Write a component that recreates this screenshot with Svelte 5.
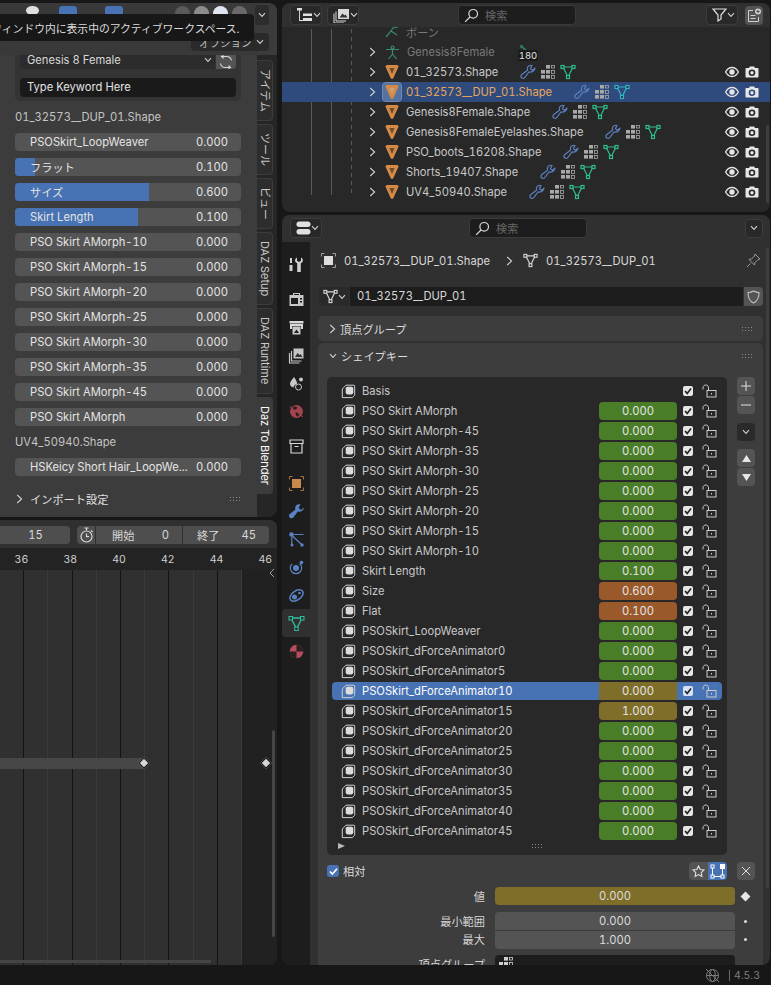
<script>
	const morphs = [
		{ name: 'PSOSkirt_LoopWeaver', value: '0.000', fill: 0 },
		{ name: 'フラット', value: '0.100', fill: 9 },
		{ name: 'サイズ', value: '0.600', fill: 59.3 },
		{ name: 'Skirt Length', value: '0.100', fill: 54.4 },
		{ name: 'PSO Skirt AMorph-10', value: '0.000', fill: 0 },
		{ name: 'PSO Skirt AMorph-15', value: '0.000', fill: 0 },
		{ name: 'PSO Skirt AMorph-20', value: '0.000', fill: 0 },
		{ name: 'PSO Skirt AMorph-25', value: '0.000', fill: 0 },
		{ name: 'PSO Skirt AMorph-30', value: '0.000', fill: 0 },
		{ name: 'PSO Skirt AMorph-35', value: '0.000', fill: 0 },
		{ name: 'PSO Skirt AMorph-45', value: '0.000', fill: 0 },
		{ name: 'PSO Skirt AMorph', value: '0.000', fill: 0 }
	];

	const sideTabs = [
		{ label: 'アイテム' },
		{ label: 'ツール' },
		{ label: 'ビュー' },
		{ label: 'DAZ Setup' },
		{ label: 'DAZ Runtime' },
		{ label: 'Daz To Blender', active: true }
	];

	const rulerLabels = ['36', '38', '40', '42', '44', '46'];
	const gridCells = [0, 1, 2, 3, 4, 5, 6, 7, 8, 9];

	const meshes = [
		{ name: '01_32573.Shape' },
		{ name: '01_32573__DUP_01.Shape', selected: true },
		{ name: 'Genesis8Female.Shape' },
		{ name: 'Genesis8FemaleEyelashes.Shape' },
		{ name: 'PSO_boots_16208.Shape' },
		{ name: 'Shorts_19407.Shape' },
		{ name: 'UV4_50940.Shape' }
	];

	const shapeKeys = [
		{ name: 'Basis' },
		{ name: 'PSO Skirt AMorph', value: '0.000' },
		{ name: 'PSO Skirt AMorph-45', value: '0.000' },
		{ name: 'PSO Skirt AMorph-35', value: '0.000' },
		{ name: 'PSO Skirt AMorph-30', value: '0.000' },
		{ name: 'PSO Skirt AMorph-25', value: '0.000' },
		{ name: 'PSO Skirt AMorph-20', value: '0.000' },
		{ name: 'PSO Skirt AMorph-15', value: '0.000' },
		{ name: 'PSO Skirt AMorph-10', value: '0.000' },
		{ name: 'Skirt Length', value: '0.100' },
		{ name: 'Size', value: '0.600', tone: 'orange' },
		{ name: 'Flat', value: '0.100', tone: 'orange' },
		{ name: 'PSOSkirt_LoopWeaver', value: '0.000' },
		{ name: 'PSOSkirt_dForceAnimator0', value: '0.000' },
		{ name: 'PSOSkirt_dForceAnimator5', value: '0.000' },
		{ name: 'PSOSkirt_dForceAnimator10', value: '0.000', tone: 'yellow', selected: true },
		{ name: 'PSOSkirt_dForceAnimator15', value: '1.000', tone: 'yellow' },
		{ name: 'PSOSkirt_dForceAnimator20', value: '0.000' },
		{ name: 'PSOSkirt_dForceAnimator25', value: '0.000' },
		{ name: 'PSOSkirt_dForceAnimator30', value: '0.000' },
		{ name: 'PSOSkirt_dForceAnimator35', value: '0.000' },
		{ name: 'PSOSkirt_dForceAnimator40', value: '0.000' },
		{ name: 'PSOSkirt_dForceAnimator45', value: '0.000' }
	];

	const editorTabs = [
		{ icon: 'tool' },
		{ icon: 'render', gap: 'wide' },
		{ icon: 'output' },
		{ icon: 'layer' },
		{ icon: 'scene' },
		{ icon: 'world' },
		{ icon: 'collection', gap: 'wide' },
		{ icon: 'object', gap: 'wider' },
		{ icon: 'modifier' },
		{ icon: 'particles' },
		{ icon: 'physics' },
		{ icon: 'constraint' },
		{ icon: 'data', active: true },
		{ icon: 'material' }
	];
</script>

{#snippet chevronDown()}
	<svg class="chev" viewBox="0 0 8 6"><path d="M1 1.2 4 4.4 7 1.2" /></svg>
{/snippet}

{#snippet chevronRight()}
	<svg class="chev-r" viewBox="0 0 7 10"><path d="M1.2 1 5.6 5 1.2 9" /></svg>
{/snippet}

{#snippet grip()}
	<svg class="grip" viewBox="0 0 12 6"><path d="M1 1h1v1H1zM4 1h1v1H4zM7 1h1v1H7zM10 1h1v1h-1zM1 4h1v1H1zM4 4h1v1H4zM7 4h1v1H7zM10 4h1v1h-1z" /></svg>
{/snippet}

{#snippet meshData(color, size = 16)}
	<svg width={size} height={size} viewBox="0 0 16 16" fill="none" stroke={color} stroke-width="1.2">
		<path d="M3 3h10L8 13z" />
		<rect x="1" y="1.5" width="3" height="3" fill="#282828" />
		<rect x="12" y="1.5" width="3" height="3" fill="#282828" />
		<rect x="6.5" y="11.5" width="3" height="3" fill="#282828" />
	</svg>
{/snippet}

{#snippet wrench(color)}
	<svg width="16" height="16" viewBox="0 0 16 16" fill="none" stroke={color} stroke-width="1.2" stroke-linejoin="round">
		<path d="M15 4.200 12.300 6.200 10.400 4.600 12 1.500C9.800.7 7.600 2 7.400 4.200c-.1.700.1 1.300.3 1.900L1.600 10.700c-1 .9-.9 2.500.1 3.200 1 .8 2.400.6 3.100-.4l4.300-5.600c2.600.6 5.500-.8 5.900-3.700z" />
	</svg>
{/snippet}

{#snippet vertexGroups(color = '#a8a8a8')}
	<svg width="16" height="16" viewBox="0 0 16 16" fill={color}>
		<rect x="6" y="1" width="4" height="3.600" />
		<rect x="1" y="6" width="4" height="3.600" />
		<rect x="6" y="6" width="4" height="3.600" />
		<rect x="1" y="11" width="4" height="3.600" />
		<rect x="6" y="11" width="4" height="3.600" />
		<rect x="11.500" y="6.500" width="3" height="3" fill="none" stroke={color} stroke-width="0.8" />
		<rect x="11.500" y="11.500" width="3" height="3" fill="none" stroke={color} stroke-width="0.8" />
		<rect x="11.500" y="1.500" width="3" height="2.500" fill="none" stroke={color} stroke-width="0.8" />
	</svg>
{/snippet}

{#snippet eye()}
	<svg width="14" height="12" viewBox="0 0 14 12">
		<path d="M.6 6C2.200 3 4.500 1.500 7 1.500S11.800 3 13.400 6C11.800 9 9.500 10.500 7 10.500S2.200 9 .6 6z" fill="none" stroke="#e6e6e6" stroke-width="1.300" />
		<circle cx="7" cy="6" r="2.700" fill="#e6e6e6" />
	</svg>
{/snippet}

{#snippet camera()}
	<svg width="14" height="12" viewBox="0 0 14 12">
		<path fill-rule="evenodd" fill="#e6e6e6" d="M1.500 2H4l.8-1.500h4.400L10 2h2.500c.6 0 1 .4 1 1v7.500c0 .6-.4 1-1 1h-11c-.6 0-1-.4-1-1V3c0-.6.4-1 1-1zM7 3.500a3.300 3.300 0 1 0 0 6.600 3.300 3.300 0 0 0 0-6.600z" />
		<circle cx="7" cy="6.800" r="1.700" fill="#e6e6e6" />
	</svg>
{/snippet}

{#snippet search()}
	<svg class="search-ico" viewBox="0 0 16 16" fill="none" stroke="#d8d8d8" stroke-width="1.300">
		<circle cx="9.800" cy="6.200" r="4.600" />
		<path d="M6.400 9.600 1.200 14.800" />
	</svg>
{/snippet}

{#snippet shapeKeyIcon()}
	<svg class="sk-ico" width="15" height="15" viewBox="0 0 15 15">
		<path d="M5 1.200h8c.4 0 .7.300.7.700v9c0 .4-.2.700-.5.900l-2 1.800H1.300V5z" fill="none" stroke="#cfcfcf" stroke-width="1" />
		<rect x="4.700" y="2.800" width="7.600" height="7.600" rx="1.800" fill="#dcdcdc" />
	</svg>
{/snippet}

{#snippet lock()}
	<svg class="lock" width="15" height="14" viewBox="0 0 15 14" fill="none" stroke="#cdcdcd" stroke-width="1">
		<path d="M1 5.500V3.800C1 2.300 2.200 1 3.800 1S6.500 2.300 6.500 3.800V6.500" />
		<rect x="5" y="6.500" width="9" height="6.500" />
		<path d="M9.500 9v1.500" />
	</svg>
{/snippet}

{#snippet tabIcon(name)}
	<svg width="17" height="17" viewBox="0 0 17 17">
		{#if name === 'tool'}
			<path d="M2 2h2v5H2zM1.500 9h3v6h-3z" fill="#d0d0d0" />
			<path d="M9 1.500v3.200l2 1.300 2-1.300V1.500c2 .8 2.600 3.600 1 5l-1.200.7V16h-3.600V7.200l-1.200-.7C6.400 5.100 7 2.300 9 1.500z" fill="#d0d0d0" />
		{:else if name === 'render'}
			<path fill-rule="evenodd" fill="#c8c8c8" d="M5 4V2h7v2h3.500v11H1.500V4zm1-1v1h5V3zM3 7v6h7V7zm9 0v1.500h2V7zm0 3v1.500h2V10z" />
		{:else if name === 'output'}
			<path d="M1.500 2h14v2.500h-14z" fill="#d8d8d8" />
			<path d="M2 5h13v5h-2V7H4v3H2z" fill="#d8d8d8" />
			<path fill-rule="evenodd" d="M4.500 7.500h8v8h-8zm1.500 6.500h5l-2.500-3.500z" fill="#c8c8c8" />
		{:else if name === 'layer'}
			<path d="M5.500 1.500h10v10h-10z" fill="#c4c4c4" />
			<path d="M7 10l2.500-4 2 2 1-1 2 3z" fill="#333" />
			<path d="M3.500 4v10h10M1.500 6v10h10" fill="none" stroke="#c4c4c4" stroke-width="1.200" />
		{:else if name === 'scene'}
			<path d="M6 2c1.500 2.600 3 4.400 3 6 0 .5-.1.900-.3 1.300-1.600.2-2.900 1.500-3.200 3.200C3.600 12.300 2 10.800 2 8.800 2 6.500 4.400 4.600 6 2z" fill="#c8c8c8" />
			<circle cx="10.500" cy="12" r="3" fill="none" stroke="#c8c8c8" />
			<circle cx="13" cy="4.500" r="2" fill="#c8c8c8" />
		{:else if name === 'world'}
			<circle cx="8.500" cy="8.500" r="6.500" fill="#a3434f" />
			<path d="M5 4c2-1 3.500-.5 4 .5S7.500 7 6 7 4 5 5 4zM8 9c2 0 4 1 3.500 2.500S9 14 8.500 13 7 9.500 8 9z" fill="#2a1e20" />
			<path d="M2 3.500 15 14" stroke="#a3434f" stroke-width="1" />
		{:else if name === 'collection'}
			<path d="M2 2h13v3.500H2z" fill="none" stroke="#d8d8d8" stroke-width="1.200" />
			<path d="M3 5.500V15h11V5.500M6.500 8.500h4" fill="none" stroke="#d8d8d8" stroke-width="1.200" />
		{:else if name === 'object'}
			<rect x="4" y="4" width="9" height="9" fill="#c9884e" />
			<path d="M1.500 4.500v-3h3M12.500 1.500h3v3M15.500 12.500v3h-3M4.500 15.500h-3v-3" fill="none" stroke="#a8733f" />
		{:else if name === 'modifier'}
			<path d="M16 4.500 13 7 10.500 5l2-3.500C10 .5 7.500 2 7.200 4.500c-.1.800.1 1.500.3 2.100L1.800 11c-1.200 1-1.100 2.800.1 3.700 1.200.9 2.800.7 3.600-.5L9.800 8.500c3 .7 6-1 6.200-4z" fill="#5b83c4" />
		{:else if name === 'particles'}
			<circle cx="3.500" cy="3.500" r="2.300" fill="#5b83c4" />
			<circle cx="14" cy="14" r="1.700" fill="#5b83c4" />
			<circle cx="4" cy="14" r="1.500" fill="#5b83c4" />
			<path d="M4 4.500 13 13M6 3.500h9.500M3.800 6v7" stroke="#5b83c4" stroke-width="1.200" />
		{:else if name === 'physics'}
			<circle cx="8" cy="9" r="5.700" fill="none" stroke="#5b83c4" stroke-width="1.200" stroke-dasharray="22 8" />
			<circle cx="8" cy="9" r="3" fill="#5b83c4" />
			<circle cx="13.500" cy="3.500" r="1.800" fill="#5b83c4" />
		{:else if name === 'constraint'}
			<ellipse cx="8.500" cy="8.500" rx="7.500" ry="4.500" transform="rotate(-35 8.500 8.500)" fill="none" stroke="#5b83c4" stroke-width="1.500" />
			<circle cx="6.500" cy="10" r="2.500" fill="#5b83c4" />
			<circle cx="11.500" cy="6" r="1.300" fill="#5b83c4" />
		{:else if name === 'data'}
			<path d="M3 3h11L8.500 14z" fill="none" stroke="#2fbf9b" stroke-width="1.300" />
			<rect x="1" y="1.500" width="3.500" height="3.500" fill="#303030" stroke="#2fbf9b" />
			<rect x="12.500" y="1.500" width="3.500" height="3.500" fill="#303030" stroke="#2fbf9b" />
			<rect x="6.700" y="12" width="3.500" height="3.500" fill="#303030" stroke="#2fbf9b" />
		{:else if name === 'material'}
			<circle cx="8.500" cy="8.500" r="6.800" fill="#b84c5c" />
			<path d="M8.500 1.700A6.800 6.800 0 0 1 15.300 8.500H8.500zM8.500 8.500H1.700A6.800 6.800 0 0 0 8.500 15.300z" fill="#262022" />
		{/if}
	</svg>
{/snippet}

<div class="screen">
	<div class="workspace">
		<div class="left">
			<section class="viewport">
				<div class="sidebar-col">
					<div class="top-strip">
						<div class="clipped-icons">
							<span class="hdr-eye"></span>
							<span class="hdr-blue one"></span>
							<span class="hdr-blue two"></span>
							<span class="hdr-sphere"></span>
							<span class="hdr-sphere"></span>
							<span class="hdr-sphere lit"></span>
							<span class="hdr-sphere"></span>
						</div>
					</div>
					<div class="preset-box">
						<div class="preset-row">
							<div class="preset-select">
								<span>Genesis 8 Female</span>
								{@render chevronDown()}
							</div>
							<div class="refresh">
								<svg width="14" height="14" viewBox="0 0 14 14" fill="none" stroke="#d8d8d8" stroke-width="1.100">
									<path d="M1.500 8.500c.5 2.500 2.500 4 5 4h5M12.500 5.500c-.5-2.500-2.500-4-5-4h-5M9.500 10.500l2 2-2 1M4.500 3.500l-2-2 2-1" />
								</svg>
							</div>
						</div>
						<div class="keyword">Type Keyword Here</div>
					</div>

					<div class="group-label">01_32573__DUP_01.Shape</div>
					<div class="sliders">
						{#each morphs as morph}
							<div class="slider">
								<div class="slider-fill" style="width: {morph.fill}%"></div>
								<span class="slider-name">{morph.name}</span>
								<span class="slider-value">{morph.value}</span>
							</div>
						{/each}
					</div>
					<div class="group-label">UV4_50940.Shape</div>
					<div class="sliders">
						<div class="slider">
							<span class="slider-name">HSKeicy Short Hair_LoopWe...</span>
							<span class="slider-value">0.000</span>
						</div>
					</div>
					<div class="import-row">
						{@render chevronRight()}
						<span>インポート設定</span>
						{@render grip()}
					</div>
				</div>

				<div class="side-tabs">
					{#each sideTabs as tab}
						<div class="side-tab" class:active={tab.active}>{tab.label}</div>
					{/each}
				</div>

				<div class="options-drop">
					<span>オプション</span>
					{@render chevronDown()}
				</div>
				<div class="top-drop">{@render chevronDown()}</div>
				<div class="tooltip"><span>ウィンドウ内に表示中のアクティブワークスペース.</span></div>
			</section>

			<section class="timeline">
				<div class="tl-header">
					<div class="tl-current">15</div>
					<div class="tl-range">
						<div class="tl-clock">
							<svg width="15" height="16" viewBox="0 0 15 16" fill="none" stroke="#d8d8d8" stroke-width="1.200">
								<circle cx="7.500" cy="9.500" r="5.500" />
								<path d="M7.500 6.500v3.200h2.500M5.500 1h4M7.500 1v2.500M12 3.500l1.500 1.500" />
							</svg>
						</div>
						<div class="tl-field"><span>開始</span><span>0</span></div>
						<div class="tl-field"><span>終了</span><span>45</span></div>
					</div>
				</div>
				<div class="tl-ruler">
					{#each rulerLabels as label}
						<span>{label}</span>
					{/each}
					<svg class="tl-arrow" width="6" height="10" viewBox="0 0 6 10" fill="none" stroke="#a0a0a0"><path d="M5 1 1 5l4 4" /></svg>
				</div>
				<div class="tl-canvas">
					<div class="tl-grid">
						{#each gridCells as i}
							<div class="tl-cell" class:major={i % 2 === 0}></div>
						{/each}
					</div>
					<div class="tl-hold"></div>
					<div class="tl-key first"></div>
					<div class="tl-key second"></div>
					<div class="tl-vscroll"></div>
					<div class="tl-hscroll"></div>
				</div>
			</section>
		</div>

		<div class="right">
			<section class="outliner">
				<div class="ol-header">
					<div class="hdr-btn">
						<svg width="17" height="14" viewBox="0 0 17 14" fill="#e0e0e0"><path d="M1 0h5v2.500H1zM3 2.500h.9V12H8v1H3zM7 5.500h9V8H7zM7 10h9v3H7z" /></svg>
						{@render chevronDown()}
					</div>
					<div class="hdr-btn second">
						<svg width="17" height="15" viewBox="0 0 17 15"><path d="M5 1h11v10H5z" fill="#d8d8d8" /><path d="M6.500 9.500l3-4 2 2 1-1 2 3z" fill="#333" /><path d="M3 3.500V13h10M1 5.500V15h10" fill="none" stroke="#d8d8d8" /></svg>
						{@render chevronDown()}
					</div>
					<div class="search-box ol-search">
						{@render search()}
						<span>検索</span>
					</div>
					<div class="hdr-btn filter">
						<svg width="15" height="14" viewBox="0 0 15 14" fill="none" stroke="#e0e0e0" stroke-width="1.200"><path d="M1 1h13L9 7v4l-3 2V7z" /></svg>
						{@render chevronDown()}
					</div>
					<div class="new-coll">
						<svg width="15" height="15" viewBox="0 0 15 15" fill="none" stroke="#d0d0d0"><path d="M6 2.500H1.500v11h10V9M3.500 7.500h5M3.500 10.500h5" /><circle cx="11" cy="3.500" r="3" fill="#d0d0d0" stroke="none" /><path d="M11 1.800v3.400M9.300 3.500h3.400" stroke="#555" /></svg>
					</div>
				</div>

				<div class="ol-rows">
					<i class="tree-line" style="left: 29px"></i>
					<i class="tree-line" style="left: 49px"></i>
					<i class="tree-line dashed" style="left: 69px"></i>

					<div class="ol-row dim clip">
						<svg class="ol-obj" width="14" height="12" viewBox="0 0 14 12" fill="none" stroke="#3c8a74" stroke-width="1.200"><path d="M1 11 6 5l2-3 5-1M6 5l6 4" /></svg>
						<span class="ol-name">ボーン</span>
					</div>
					<div class="ol-row dim">
						<span class="ol-exp">{@render chevronRight()}</span>
						<svg class="ol-obj" width="15" height="15" viewBox="0 0 15 15" fill="none" stroke="#3c8a74" stroke-width="1.200"><circle cx="7.500" cy="2.500" r="1.500" /><path d="M1 4.500h13M7.500 4v5M7.500 9 3.500 14M7.500 9l4 5" /></svg>
						<span class="ol-name">Genesis8Female</span>
						<span class="bone-badge">
							<svg width="10" height="10" viewBox="0 0 10 10" fill="#2d7a5c"><path d="M1 1.500 3 .5l1.500 2.500L9 7l-1.500 2-4-4.500L1 3.500z" /></svg>
							<b>180</b>
						</span>
					</div>
					{#each meshes as mesh}
						<div class="ol-row" class:selected={mesh.selected}>
							<span class="ol-exp">{@render chevronRight()}</span>
							<span class="ol-obj mesh-wrap">
								<svg width="14" height="16" viewBox="0 0 14 16" fill="none">
									<path d="M2 2.500h10L7 13.500z" stroke="#d58a47" stroke-width="3" stroke-linejoin="round" fill={mesh.selected ? '#c9a27d' : '#6e4d30'} />
								</svg>
							</span>
							<span class="ol-name">{mesh.name}</span>
							<span class="ol-mods">
								{@render wrench('#5b7fbf')}
								{@render vertexGroups()}
								{@render meshData(mesh.selected ? '#2fb4c8' : '#2fbf8f')}
							</span>
							<span class="ol-vis">{@render eye()}{@render camera()}</span>
						</div>
					{/each}
				</div>
				<div class="ol-scroll"></div>
			</section>

			<section class="props">
				<div class="props-header">
					<div class="hdr-btn">
						<svg width="15" height="14" viewBox="0 0 15 14"><rect x=".5" y=".5" width="14" height="5.500" rx="2.700" fill="#e0e0e0" /><rect x=".5" y="8" width="14" height="5.500" rx="2.700" fill="#e0e0e0" /></svg>
						{@render chevronDown()}
					</div>
					<div class="search-box props-search">
						{@render search()}
						<span>検索</span>
					</div>
					<div class="hdr-square">{@render chevronDown()}</div>
				</div>
				<div class="props-body">
					<nav class="editor-tabs">
						{#each editorTabs as tab}
							<div class="editor-tab {tab.gap ?? ''}" class:active={tab.active}>{@render tabIcon(tab.icon)}</div>
						{/each}
					</nav>

					<div class="props-main">
						<div class="crumbs">
							<svg width="15" height="15" viewBox="0 0 15 15"><rect x="3" y="3" width="9" height="9" fill="#dedede" /><path d="M.5 3.500v-3h3M11.500.5h3v3M14.500 11.500v3h-3M3.500 14.500h-3v-3" fill="none" stroke="#a0a0a0" /></svg>
							<span class="crumb-a">01_32573__DUP_01.Shape</span>
							{@render chevronRight()}
							<span class="crumb-mesh">{@render meshData('#d8d8d8', 15)}</span>
							<span class="crumb-b">01_32573__DUP_01</span>
							<svg class="pin" width="15" height="15" viewBox="0 0 15 15" fill="none" stroke="#9a9a9a"><path d="M9 1l5 5-2 .5-3 3-.5 2.500-5.500-5.500L5.500 6l3-3zM4.500 10.500 1 14" /></svg>
						</div>

						<div class="data-row">
							<div class="data-icon">
								{@render meshData('#d8d8d8', 15)}
								{@render chevronDown()}
							</div>
							<div class="data-name">01_32573__DUP_01</div>
							<div class="data-shield">
								<svg width="13" height="14" viewBox="0 0 13 14" fill="none" stroke="#c4c4c4" stroke-width="1.100"><path d="M6.500 1C8 2 10 2.500 12 2.500c0 4.500-1 8.500-5.500 10.500C2 11 1 7 1 2.500 3 2.500 5 2 6.500 1z" /></svg>
							</div>
						</div>

						<div class="panel closed">
							<div class="panel-head">
								{@render chevronRight()}
								<span>頂点グループ</span>
								{@render grip()}
							</div>
						</div>

						<div class="panel open">
							<div class="panel-head">
								{@render chevronDown()}
								<span>シェイプキー</span>
								{@render grip()}
							</div>

							<div class="keys-area">
								<div class="keys-list">
									{#each shapeKeys as key}
										<div class="key-row" class:selected={key.selected}>
											{@render shapeKeyIcon()}
											<span class="key-name">{key.name}</span>
											{#if key.value}
												<span class="key-value {key.tone ?? 'green'}">{key.value}</span>
											{/if}
											<span class="key-check">
												<svg width="10" height="10" viewBox="0 0 10 10" fill="none" stroke="#222" stroke-width="1.600"><path d="M2 5l2.200 2.400L8 2.600" /></svg>
											</span>
											{@render lock()}
										</div>
									{/each}
									<div class="keys-foot">
										<svg class="keys-tri" width="7" height="6" viewBox="0 0 7 6" fill="#bbb"><path d="M0 0l7 3-7 3z" /></svg>
										{@render grip()}
									</div>
								</div>

								<div class="keys-side">
									<div class="side-group">
										<div class="side-btn"><svg width="10" height="10" viewBox="0 0 10 10" stroke="#e0e0e0"><path d="M0 5h10M5 0v10" /></svg></div>
										<div class="side-btn"><svg width="10" height="10" viewBox="0 0 10 10" stroke="#e0e0e0"><path d="M0 5h10" /></svg></div>
									</div>
									<div class="side-btn dark">{@render chevronDown()}</div>
									<div class="side-group">
										<div class="side-btn"><svg width="9" height="7" viewBox="0 0 9 7" fill="#e6e6e6"><path d="M4.500 0 9 7H0z" /></svg></div>
										<div class="side-btn"><svg width="9" height="7" viewBox="0 0 9 7" fill="#e6e6e6"><path d="M0 0h9L4.500 7z" /></svg></div>
									</div>
								</div>
							</div>

							<div class="relative-row">
								<span class="rel-check">
									<svg width="11" height="11" viewBox="0 0 11 11" fill="none" stroke="#fff" stroke-width="1.600"><path d="M2 5.500l2.400 2.600L9 2.800" /></svg>
								</span>
								<span class="rel-label">相対</span>
								<div class="rel-tools">
									<span class="rel-tool">
										<svg width="13" height="13" viewBox="0 0 13 13" fill="none" stroke="#e0e0e0" stroke-width="1.100"><path d="M6.500 1l1.700 3.500 3.800.5-2.800 2.600.7 3.800-3.400-1.800-3.400 1.800.7-3.800L1 5l3.800-.5z" /></svg>
									</span>
									<span class="rel-tool on">
										<svg width="15" height="15" viewBox="0 0 15 15" fill="none" stroke="#fff"><path d="M2.500 2.500v10h10V5" /><rect x="1" y="1" width="3" height="3" fill="#4772b3" /><rect x="1" y="11" width="3" height="3" fill="#4772b3" /><rect x="11" y="11" width="3" height="3" fill="#4772b3" /><rect x="10" y="0" width="5" height="5" fill="#fff" stroke="none" /></svg>
									</span>
								</div>
								<span class="rel-close">
									<svg width="10" height="10" viewBox="0 0 10 10" stroke="#e0e0e0"><path d="M1 1l8 8M9 1 1 9" /></svg>
								</span>
							</div>

							<div class="prop-row value-row">
								<span class="prop-label">値</span>
								<span class="prop-field yellow">0.000</span>
								<span class="prop-deco"><i class="deco-diamond"></i></span>
							</div>
							<div class="prop-row top-gap">
								<span class="prop-label">最小範囲</span>
								<span class="prop-field joined-top">0.000</span>
								<span class="prop-deco"><i class="deco-dot"></i></span>
							</div>
							<div class="prop-row">
								<span class="prop-label">最大</span>
								<span class="prop-field joined-bottom">1.000</span>
								<span class="prop-deco"><i class="deco-dot"></i></span>
							</div>
							<div class="prop-row vg-row">
								<span class="prop-label">頂点グループ</span>
								<span class="prop-field dark">{@render vertexGroups('#d0d0d0')}</span>
							</div>
						</div>
					</div>
					<div class="props-scroll"></div>
				</div>
			</section>
		</div>
	</div>

	<footer class="status">
		<svg width="15" height="15" viewBox="0 0 15 15" fill="none" stroke="#7c7c7c"><circle cx="7.500" cy="7.500" r="6" /><ellipse cx="7.500" cy="7.500" rx="2.800" ry="6" /><path d="M1.500 7.500h12M1 1l13 13" /></svg>
		<span class="status-bar"></span>
		<span>4.5.3</span>
	</footer>
</div>

<style>
	:global(body) {
		margin: 0;
		background: #171717;
	}

	.screen {
		width: 771px;
		height: 985px;
		overflow: hidden;
		display: flex;
		flex-direction: column;
		background: #171717;
		color: #d8d8d8;
		font-family: Inter, 'Noto Sans CJK JP', sans-serif;
		font-size: 11.2px;
		font-variant-numeric: tabular-nums;
	}

	svg {
		flex: none;
		display: block;
	}

	.chev {
		width: 8px;
		height: 6px;
		fill: none;
		stroke: #cfcfcf;
		stroke-width: 1.1;
	}

	.chev-r {
		width: 7px;
		height: 10px;
		fill: none;
		stroke: #cfcfcf;
		stroke-width: 1.1;
	}

	.grip {
		width: 12px;
		height: 6px;
		fill: #8a8a8a;
	}

	.workspace {
		height: 965px;
		display: flex;
		gap: 5px;
		overflow: hidden;
	}

	.left {
		width: 277px;
		flex: none;
		display: flex;
		flex-direction: column;
		gap: 3px;
		padding-top: 3px;
	}

	.right {
		width: 488px;
		flex: none;
		display: flex;
		flex-direction: column;
		gap: 3px;
		padding-top: 3px;
	}

	/* left: viewport with the N panel */
	.viewport {
		position: relative;
		height: 514px;
		flex: none;
		display: flex;
		background: #262626;
		border-radius: 0 8px 8px 0;
		overflow: hidden;
	}

	.sidebar-col {
		width: 257px;
		flex: none;
		box-sizing: border-box;
		padding: 0 16px 0 15px;
		background: #3c3c3c;
	}

	.top-strip {
		height: 52px;
		margin: 0 -16px 0 -15px;
		background: #393939;
	}

	.clipped-icons {
		height: 11px;
		position: relative;
		overflow: hidden;
	}

	.clipped-icons span {
		position: absolute;
		top: 3px;
	}

	.hdr-eye {
		left: 26px;
		width: 13px;
		height: 9px;
		background: #e0e0e0;
		border-radius: 50%;
	}

	.hdr-blue {
		width: 18px;
		height: 16px;
		background: #4772b3;
		border-radius: 3px 3px 0 0;
	}

	.hdr-blue.one {
		left: 59px;
	}

	.hdr-blue.two {
		left: 105px;
	}

	.hdr-sphere {
		width: 15px;
		height: 15px;
		border-radius: 50%;
		background: #888;
	}

	.hdr-sphere:nth-child(4) {
		left: 175px;
		background: #5a5a5a;
	}

	.hdr-sphere:nth-child(5) {
		left: 194px;
		background: #8c8c8c;
	}

	.hdr-sphere.lit {
		left: 213px;
		background: #dfe6f2;
	}

	.hdr-sphere:nth-child(7) {
		left: 232px;
		background: #6a6a6a;
	}

	.top-drop {
		position: absolute;
		right: 8px;
		top: 2px;
		width: 14px;
		height: 20px;
		border-radius: 4px;
		background: #2c2c2c;
		display: flex;
		align-items: center;
		justify-content: center;
	}

	.options-drop {
		position: absolute;
		left: 191px;
		top: 30px;
		width: 78px;
		height: 18px;
		box-sizing: border-box;
		padding: 0 5px 0 8px;
		border-radius: 4px;
		background: #2a2a2a;
		display: flex;
		align-items: center;
		justify-content: space-between;
		font-size: 10.5px;
		color: #bbb;
	}

	.tooltip {
		position: absolute;
		left: 0;
		top: 11px;
		width: 254px;
		height: 27px;
		box-sizing: border-box;
		display: flex;
		align-items: center;
		overflow: hidden;
		background: #171717;
		border-radius: 0 4px 4px 0;
		font-size: 10.8px;
		color: #dcdcdc;
		white-space: nowrap;
	}

	.tooltip span {
		margin-left: -9px;
	}

	.preset-box {
		height: 46px;
		margin-right: 0;
		box-sizing: border-box;
		padding: 0 5px 0 5px;
		background: #343434;
		border-radius: 0 0 5px 5px;
		display: flex;
		flex-direction: column;
		gap: 9px;
	}

	.preset-row {
		height: 14px;
		display: flex;
		gap: 1px;
	}

	.preset-select {
		flex: 1;
		box-sizing: border-box;
		padding: 0 3px 4px 7px;
		display: flex;
		align-items: center;
		justify-content: space-between;
		background: #2c2c2c;
		border-radius: 0 0 0 4px;
		color: #d8d8d8;
	}

	.refresh {
		width: 20px;
		display: flex;
		align-items: center;
		justify-content: center;
		background: #545454;
		border-radius: 0 0 4px 0;
	}

	.keyword {
		height: 19px;
		box-sizing: border-box;
		padding-left: 7px;
		line-height: 19px;
		background: #1a1a1a;
		border-radius: 4px;
		color: #e2e2e2;
	}

	.group-label {
		height: 32px;
		line-height: 32px;
		color: #c4c4c4;
	}

	.sliders {
		display: flex;
		flex-direction: column;
		gap: 7px;
	}

	.slider {
		position: relative;
		height: 18px;
		overflow: hidden;
		display: flex;
		align-items: center;
		justify-content: space-between;
		padding: 0 13px 0 15px;
		background: #545454;
		border-radius: 4px;
		color: #e4e4e4;
	}

	.slider-fill {
		position: absolute;
		left: 0;
		top: 0;
		bottom: 0;
		background: #4772b3;
	}

	.slider-name,
	.slider-value {
		position: relative;
		white-space: nowrap;
	}

	.import-row {
		height: 22px;
		margin-top: 12px;
		display: flex;
		align-items: center;
		gap: 7px;
		padding-left: 1px;
		color: #e0e0e0;
	}

	.import-row span {
		flex: 1;
	}

	.side-tabs {
		flex: 1;
		display: flex;
		flex-direction: column;
		gap: 3px;
		padding-top: 57px;
		background: linear-gradient(#3b3b3b 52px, transparent 52px);
	}

	.side-tab {
		writing-mode: vertical-rl;
		text-orientation: sideways;
		box-sizing: border-box;
		width: 16px;
		padding: 8px 0;
		background: #2d2d2d;
		border: 1px solid #3c3c3c;
		border-left: none;
		border-radius: 0 4px 4px 0;
		display: flex;
		align-items: center;
		color: #c8c8c8;
		font-size: 11px;
		line-height: 14px;
	}

	.side-tab.active {
		background: #3c3c3c;
		color: #ffffff;
	}

	/* left: timeline */
	.timeline {
		flex: 1;
		min-height: 0;
		display: flex;
		flex-direction: column;
		background: #303030;
		border-radius: 0 8px 8px 0;
		overflow: hidden;
	}

	.tl-header {
		height: 28px;
		flex: none;
		display: flex;
		align-items: center;
		gap: 7px;
		box-sizing: border-box;
		padding-top: 1px;
		background: #303030;
	}

	.tl-current {
		width: 70px;
		height: 18px;
		line-height: 18px;
		text-align: center;
		background: #4e4e4e;
		border-radius: 0 4px 4px 0;
		text-indent: 1px;
		color: #dcdcdc;
	}

	.tl-range {
		display: flex;
		gap: 1px;
		height: 18px;
	}

	.tl-clock {
		width: 18px;
		display: flex;
		align-items: center;
		justify-content: center;
		background: #4e4e4e;
		border-radius: 4px 0 0 4px;
	}

	.tl-field {
		width: 86px;
		box-sizing: border-box;
		padding: 0 13px 0 16px;
		display: flex;
		align-items: center;
		justify-content: space-between;
		background: #4e4e4e;
		color: #d8d8d8;
	}

	.tl-field:last-child {
		padding-left: 14px;
		border-radius: 0 4px 4px 0;
	}

	.tl-ruler {
		height: 22px;
		flex: none;
		position: relative;
		display: flex;
		align-items: center;
		background: #232323;
		color: #cfcfcf;
		font-size: 10.5px;
	}

	.tl-ruler span {
		width: 48.8px;
		flex: none;
		text-align: center;
		transform: translateX(-3px);
	}

	.tl-arrow {
		position: absolute;
		right: 2px;
		top: 20px;
		z-index: 1;
	}

	.tl-canvas {
		flex: 1;
		position: relative;
		overflow: hidden;
		background: #212121;
	}

	.tl-grid {
		width: 242px;
		height: 100%;
		display: flex;
		background: #303030;
	}

	.tl-cell {
		width: 24.2px;
		flex: none;
		box-sizing: border-box;
		border-right: 1px solid #3a3a3a;
	}

	.tl-cell.major {
		border-right-color: #141414;
	}

	.tl-hold {
		position: absolute;
		left: 0;
		top: 188px;
		width: 144px;
		height: 11px;
		background: #474747;
	}

	.tl-key {
		position: absolute;
		top: 189px;
		width: 6px;
		height: 6px;
		transform: rotate(45deg);
		background: #d6d6d6;
		border: 1px solid #111;
	}

	.tl-key.first {
		left: 140px;
	}

	.tl-key.second {
		left: 262px;
	}

	.tl-vscroll {
		position: absolute;
		right: 2px;
		top: 160px;
		width: 3px;
		height: 207px;
		border-radius: 2px;
		background: #454545;
	}

	.tl-hscroll {
		position: absolute;
		left: 0;
		bottom: 2px;
		width: 211px;
		height: 3px;
		background: #454545;
	}

	/* right: outliner */
	.outliner {
		position: relative;
		height: 209px;
		flex: none;
		background: #282828;
		border-radius: 8px;
		overflow: hidden;
	}

	.ol-header {
		position: relative;
		z-index: 1;
		height: 24px;
		display: flex;
		align-items: center;
		box-sizing: border-box;
		padding: 0 7px 0 8px;
		background: #303030;
	}

	.hdr-btn {
		width: 32px;
		height: 20px;
		box-sizing: border-box;
		padding: 0 4px 0 5px;
		flex: none;
		display: flex;
		align-items: center;
		justify-content: space-between;
		background: #282828;
		border: 1px solid #3d3d3d;
		border-radius: 4px;
	}

	.hdr-btn.second {
		margin-left: 5px;
	}

	.hdr-btn.filter {
		margin-left: auto;
	}

	.search-box {
		height: 20px;
		width: 118px;
		box-sizing: border-box;
		padding-left: 5px;
		display: flex;
		align-items: center;
		gap: 6px;
		background: #1d1d1d;
		border: 1px solid #3a3a3a;
		border-radius: 4px;
		color: #666;
	}

	.search-ico {
		width: 15px;
		height: 15px;
	}

	.ol-search {
		margin-left: 99px;
	}

	.new-coll {
		width: 18px;
		height: 19px;
		margin-left: 7px;
		display: flex;
		align-items: center;
		justify-content: center;
		background: #545454;
		border-radius: 4px;
	}

	.ol-rows {
		position: relative;
		margin-top: -5px;
	}

	.tree-line {
		position: absolute;
		top: 7px;
		height: 166px;
		width: 1px;
		background: #5a5a5a;
	}

	.tree-line.dashed {
		background: repeating-linear-gradient(#5a5a5a 0 4px, transparent 4px 8px);
	}

	.ol-row {
		height: 20px;
		display: flex;
		align-items: center;
		position: relative;
		color: #c8c8c8;
		padding-left: 87px;
	}

	.ol-row.dim {
		color: #7a7a7a;
	}

	.ol-row.clip .ol-obj {
		margin-left: 16px;
	}

	.ol-row.selected {
		background: #2f4a7d;
		color: #e8a657;
	}

	.ol-exp {
		width: 16px;
		flex: none;
		display: flex;
	}

	.ol-obj {
		margin-right: 7px;
		flex: none;
	}

	.mesh-wrap {
		width: 14px;
		height: 16px;
		display: block;
		position: relative;
	}

	.ol-row.selected .mesh-wrap::before {
		content: '';
		position: absolute;
		inset: -2px -3px;
		background: #56729f;
		border: 1px solid #6f88b0;
		border-radius: 4px;
	}

	.mesh-wrap svg {
		position: relative;
	}

	.ol-name {
		white-space: nowrap;
	}

	.ol-mods {
		display: flex;
		gap: 4px;
		margin-left: 22px;
	}

	.bone-badge {
		position: relative;
		margin-left: 21px;
		width: 20px;
		height: 20px;
	}

	.bone-badge svg {
		position: absolute;
		left: 3px;
		top: 2px;
	}

	.bone-badge b {
		position: absolute;
		left: 2px;
		top: 8px;
		padding: 0 1px;
		font-weight: 400;
		font-size: 9.5px;
		line-height: 11px;
		color: #e4e4e4;
		background: #1a1a1a;
		border-radius: 2px;
	}

	.ol-vis {
		position: absolute;
		right: 11px;
		display: flex;
		gap: 6px;
	}

	.ol-scroll {
		position: absolute;
		right: 1px;
		top: 122px;
		width: 3px;
		height: 78px;
		border-radius: 2px;
		background: #3e3e3e;
	}

	/* right: properties */
	.props {
		flex: 1;
		min-height: 0;
		display: flex;
		flex-direction: column;
		background: #303030;
		border-radius: 8px;
		overflow: hidden;
	}

	.props-header {
		height: 27px;
		flex: none;
		display: flex;
		align-items: center;
		box-sizing: border-box;
		padding: 0 7px 1px 8px;
		background: #303030;
	}

	.props-search {
		margin-left: 147px;
	}

	.hdr-square {
		margin-left: auto;
		width: 18px;
		height: 19px;
		display: flex;
		align-items: center;
		justify-content: center;
		background: #282828;
		border: 1px solid #3d3d3d;
		box-sizing: border-box;
		border-radius: 4px;
	}

	.props-body {
		position: relative;
		flex: 1;
		min-height: 0;
		display: flex;
	}

	.editor-tabs {
		width: 28px;
		flex: none;
		display: flex;
		flex-direction: column;
		padding-top: 8px;
		background: #1d1d1d;
	}

	.editor-tab {
		height: 28px;
		flex: none;
		padding-left: 6px;
		display: flex;
		align-items: center;
		border-radius: 4px 0 0 4px;
	}

	.editor-tab.wide {
		margin-top: 7px;
	}

	.editor-tab.wider {
		margin-top: 9px;
	}

	.editor-tab.active {
		background: #303030;
	}

	.props-main {
		flex: 1;
		min-width: 0;
		box-sizing: border-box;
		padding: 0 7px 0 8px;
		overflow: hidden;
	}

	.crumbs {
		height: 36px;
		display: flex;
		align-items: center;
		padding: 1px 0 0 3px;
		color: #d8d8d8;
		box-sizing: border-box;
	}

	.crumb-a {
		margin-left: 8px;
	}

	.crumbs .chev-r {
		margin-left: 16px;
	}

	.crumb-mesh {
		margin-left: 10px;
	}

	.crumb-b {
		margin-left: 8px;
	}

	.pin {
		margin-left: auto;
		margin-right: 2px;
	}

	.data-row {
		height: 19px;
		margin-top: 9px;
		display: flex;
		gap: 1px;
		padding-left: 1px;
	}

	.data-icon {
		width: 30px;
		box-sizing: border-box;
		padding: 0 3px 0 4px;
		display: flex;
		align-items: center;
		justify-content: space-between;
		background: #2a2a2a;
		border-radius: 4px 0 0 4px;
	}

	.data-name {
		flex: 1;
		padding-left: 7px;
		line-height: 19px;
		background: #1d1d1d;
		color: #d8d8d8;
	}

	.data-shield {
		width: 19px;
		display: flex;
		align-items: center;
		justify-content: center;
		background: #545454;
		border-radius: 0 4px 4px 0;
	}

	.panel {
		background: #3d3d3d;
		border-radius: 5px 5px 0 0;
	}

	.panel.closed {
		margin-top: 10px;
		border-radius: 5px;
		height: 25px;
	}

	.panel.open {
		margin-top: 2px;
		padding-bottom: 10px;
	}

	.panel-head {
		height: 25px;
		display: flex;
		align-items: center;
		gap: 4px;
		padding: 0 10px 0 11px;
		color: #dcdcdc;
	}

	.panel-head span {
		flex: 1;
	}

	.panel.open .panel-head {
		height: 26px;
	}

	.keys-area {
		display: flex;
		gap: 10px;
		align-items: flex-start;
		margin-top: 8px;
		padding-left: 9px;
	}

	.keys-list {
		width: 400px;
		height: 478px;
		flex: none;
		box-sizing: border-box;
		padding: 4px 5px 0;
		background: #282828;
		border-radius: 5px;
	}

	.key-row {
		height: 20px;
		display: flex;
		align-items: center;
		color: #c8c8c8;
		box-sizing: border-box;
		padding-left: 9px;
		position: relative;
	}

	.key-row.selected {
		height: 18px;
		margin: 1px 0;
		background: #4772b3;
		border-radius: 4px;
		color: #ffffff;
	}

	.key-name {
		flex: 1;
		margin-left: 6px;
		white-space: nowrap;
	}

	.key-value {
		width: 78px;
		height: 18px;
		flex: none;
		line-height: 18px;
		text-align: center;
		border-radius: 4px;
		color: #e6e6e6;
		margin-right: 45px;
	}

	.key-value.green {
		background: #4a7d27;
	}

	.key-value.orange {
		background: #99592a;
	}

	.key-value.yellow {
		background: #7f6e2a;
	}

	.key-row.selected .key-value {
		border-radius: 0;
	}

	.key-check {
		position: absolute;
		right: 29px;
		width: 10px;
		height: 10px;
		display: flex;
		align-items: center;
		justify-content: center;
		background: #e6e6e6;
		border-radius: 2px;
	}

	.key-row.selected .key-check {
		background: #d6e3f6;
	}

	.lock {
		position: absolute;
		right: 5px;
	}

	.keys-foot {
		height: 10px;
		display: flex;
		align-items: center;
		justify-content: center;
		position: relative;
	}

	.keys-foot .grip {
		margin-left: 20px;
	}

	.keys-tri {
		position: absolute;
		left: 6px;
	}

	.keys-side {
		width: 18px;
		flex: none;
		display: flex;
		flex-direction: column;
		gap: 8px;
	}

	.side-group {
		display: flex;
		flex-direction: column;
		gap: 1px;
	}

	.side-btn {
		height: 18px;
		display: flex;
		align-items: center;
		justify-content: center;
		background: #545454;
		border-radius: 4px;
	}

	.side-btn.dark {
		margin-top: 1px;
		background: #2a2a2a;
	}

	.relative-row {
		height: 18px;
		display: flex;
		align-items: center;
		margin-top: 7px;
		padding-left: 9px;
		padding-right: 8px;
	}

	.rel-check {
		width: 12px;
		height: 12px;
		display: flex;
		align-items: center;
		justify-content: center;
		background: #4772b3;
		border-radius: 3px;
	}

	.rel-label {
		margin-left: 4px;
		flex: 1;
		color: #dcdcdc;
	}

	.rel-tools {
		display: flex;
	}

	.rel-tool {
		width: 19px;
		height: 18px;
		display: flex;
		align-items: center;
		justify-content: center;
		background: #545454;
		border-radius: 4px 0 0 4px;
	}

	.rel-tool.on {
		background: #4772b3;
		border-radius: 0 4px 4px 0;
	}

	.rel-close {
		width: 18px;
		height: 18px;
		margin-left: 10px;
		display: flex;
		align-items: center;
		justify-content: center;
		background: #545454;
		border-radius: 4px;
	}

	.prop-row {
		height: 18px;
		display: flex;
		align-items: center;
		padding-right: 7px;
	}

	.value-row {
		margin-top: 7px;
	}

	.top-gap {
		margin-top: 7px;
	}

	.vg-row {
		margin-top: 7px;
	}

	.prop-label {
		width: 167px;
		flex: none;
		text-align: right;
		color: #d4d4d4;
	}

	.prop-field {
		width: 240px;
		height: 18px;
		flex: none;
		margin-left: 10px;
		line-height: 18px;
		text-align: center;
		background: #545454;
		border-radius: 4px;
		color: #dcdcdc;
	}

	.prop-field.yellow {
		background: #7f6e2a;
	}

	.prop-field.joined-top {
		border-radius: 4px 4px 0 0;
	}

	.prop-field.joined-bottom {
		border-radius: 0 0 4px 4px;
		box-sizing: border-box;
		border-top: 1px solid #3d3d3d;
		height: 19px;
		margin-top: 1px;
	}

	.prop-field.dark {
		background: #1d1d1d;
		display: flex;
		align-items: center;
		padding-left: 3px;
		box-sizing: border-box;
	}

	.prop-deco {
		width: 21px;
		display: flex;
		align-items: center;
		justify-content: center;
	}

	.deco-diamond {
		width: 7px;
		height: 7px;
		background: #e6e6e6;
		transform: rotate(45deg);
	}

	.deco-dot {
		width: 3px;
		height: 3px;
		border-radius: 50%;
		background: #dcdcdc;
	}

	.props-scroll {
		position: absolute;
		right: 1px;
		top: 6px;
		width: 3px;
		height: 640px;
		background: #3e3e3e;
		border-radius: 2px;
	}

	.status {
		height: 20px;
		flex: none;
		display: flex;
		align-items: center;
		justify-content: flex-end;
		box-sizing: border-box;
		padding-right: 11px;
		background: #171717;
		color: #7f7f7f;
		font-size: 10.5px;
	}

	.status-bar {
		width: 1px;
		height: 11px;
		margin: 0 4px 0 9px;
		background: #6a6a6a;
	}
</style>
